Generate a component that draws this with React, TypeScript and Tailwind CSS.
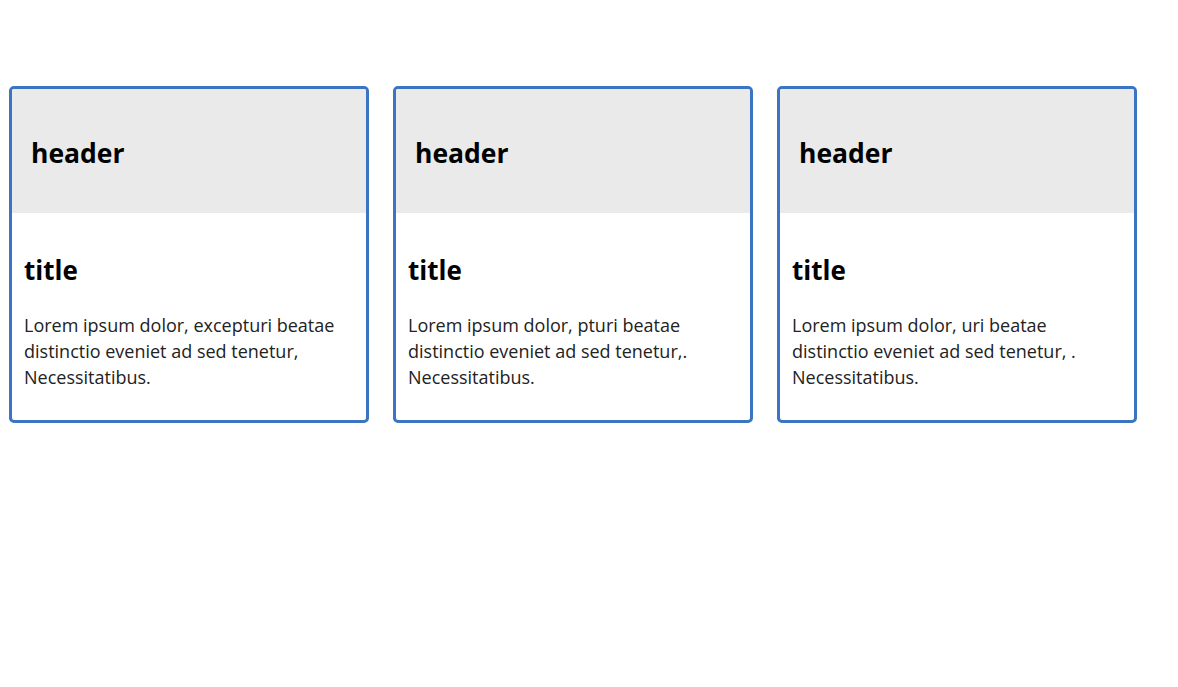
const cards = [
  { text: "Lorem ipsum dolor, excepturi beatae distinctio eveniet ad sed tenetur, Necessitatibus." },
  { text: "Lorem ipsum dolor, pturi beatae distinctio eveniet ad sed tenetur,. Necessitatibus." },
  { text: "Lorem ipsum dolor, uri beatae distinctio eveniet ad sed tenetur, . Necessitatibus." },
]

function Card({ text }: { text: string }) {
  return (
    <div className="w-[360px] border-[3px] border-[#3a74c3] rounded-[5px] overflow-hidden bg-white">
      <div className="h-[124px] bg-[#eaeaea] flex items-center px-[19px] pt-[6px]">
        <h1 className="text-[26.5px] font-bold text-black">header</h1>
      </div>
      <div className="pt-[40px] pb-[30px] px-[12px]">
        <h2 className="text-[26px] leading-[34px] font-bold text-black">title</h2>
        <p className="mt-[25px] text-[18px] leading-[26px] text-[#222]">{text}</p>
      </div>
    </div>
  )
}

export default function App() {
  return (
    <div className="min-h-screen bg-white pt-[86px] pl-[9px] font-['Open_Sans',sans-serif]">
      <div className="flex gap-[24px]">
        {cards.map((c, i) => (
          <Card key={i} text={c.text} />
        ))}
      </div>
    </div>
  )
}
